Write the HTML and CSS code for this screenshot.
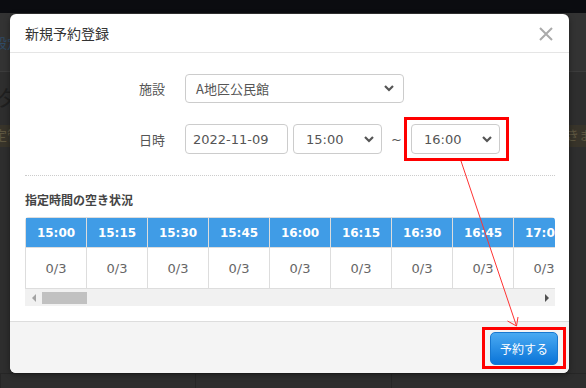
FILE: index.html
```html
<!DOCTYPE html>
<html lang="ja">
  <head>
    <meta charset="UTF-8" />
    <meta name="viewport" content="width=device-width, initial-scale=1.0" />
    <title>新規予約登録</title>
    <link rel="stylesheet" href="styles.css">
  </head>
  <body>
    <!-- page behind the overlay -->
    <div class="page">
      <div class="topbar"></div>
      <div class="nav"><span class="navLink">設定</span></div>
      <div class="pageTitle">タ</div>
      <div class="notice"><span>定管</span><span>きま</span></div>
      <div class="pageBody"></div>
      <div class="calRow">
        <span class="calCell"></span>
        <span class="calCell"></span>
        <span class="calCell"></span>
      </div>
    </div>

    <div class="modal">
      <div class="modalHeader">
        <h4 class="modalTitle">新規予約登録</h4>
        <svg class="closeBtn" width="14" height="14" viewBox="0 0 14 14">
          <path d="M1 1 L13 13 M13 1 L1 13" stroke="#aaa" stroke-width="2" fill="none" />
        </svg>
      </div>

      <div class="modalBody">
        <div class="formGrid">
          <label class="formLabel">施設</label>
          <div class="fields">
            <div class="select selectWide">
              <span>A地区公民館</span>
              <svg width="10" height="7" viewBox="0 0 10 7"><path d="M1 1 L5 5 L9 1" stroke="#555" stroke-width="2.2" fill="none" /></svg>
            </div>
          </div>

          <label class="formLabel">日時</label>
          <div class="fields">
            <div class="input dateInput">2022-11-09</div>
            <div class="select selectTime">
              <span>15:00</span>
              <svg width="10" height="7" viewBox="0 0 10 7"><path d="M1 1 L5 5 L9 1" stroke="#555" stroke-width="2.2" fill="none" /></svg>
            </div>
            <span class="tilde">~</span>
            <div class="select selectTime">
              <span>16:00</span>
              <svg width="10" height="7" viewBox="0 0 10 7"><path d="M1 1 L5 5 L9 1" stroke="#555" stroke-width="2.2" fill="none" /></svg>
            </div>
          </div>
        </div>

        <hr class="dotted" />

        <h5 class="sectionTitle">指定時間の空き状況</h5>
        <div class="slotWrap">
          <table class="slots">
            <tr>
              <th>15:00</th><th>15:15</th><th>15:30</th><th>15:45</th><th>16:00</th><th>16:15</th><th>16:30</th><th>16:45</th><th>17:00</th><th>17:15</th><th>17:30</th>
            </tr>
            <tr>
              <td>0/3</td><td>0/3</td><td>0/3</td><td>0/3</td><td>0/3</td><td>0/3</td><td>0/3</td><td>0/3</td><td>0/3</td><td>0/3</td><td>0/3</td>
            </tr>
          </table>
        </div>
        <div class="scrollbar">
          <span class="sbArrow sbLeft"></span>
          <span class="sbThumb"></span>
          <span class="sbTrack"></span>
          <span class="sbArrow sbRight"></span>
        </div>
      </div>

      <div class="modalFooter">
        <button class="btnReserve">予約する</button>
      </div>
    </div>

    <!-- red annotations -->
    <svg class="annotations" width="586" height="388" viewBox="0 0 586 388">
      <rect x="405.5" y="118.5" width="102" height="41" fill="none" stroke="#f00" stroke-width="3" />
      <rect x="483.5" y="328.5" width="81" height="39" fill="none" stroke="#f00" stroke-width="3" />
      <path d="M461 161 L516.5 326 M507.5 321 L516.5 326 L518 317" stroke="#f33" stroke-width="1" fill="none" />
    </svg>
  </body>
</html>
```

FILE: styles.css
```css
body {
  margin: 0;
  width: 586px;
  height: 388px;
  overflow: hidden;
  position: relative;
  background: #2e2e2e;
  font-family: "DejaVu Sans", "Noto Sans CJK JP", sans-serif;
}
.page {
  display: flex;
  flex-direction: column;
  height: 388px;
}
.topbar {
  height: 13px;
  background: #0b0c10;
}
.nav {
  height: 58px;
  background: #333;
  border-bottom: 1px solid #3c3c3c;
  display: flex;
  align-items: center;
}
.navLink {
  color: #2f4b66;
  font-size: 13px;
  margin-left: -6px;
}
.pageTitle {
  height: 53px;
  color: #1f1f1f;
  font-size: 22px;
  line-height: 53px;
  margin-left: -4px;
}
.notice {
  height: 22px;
  background: #38342a;
  color: #5d5640;
  font-size: 13px;
  line-height: 22px;
  display: flex;
  justify-content: space-between;
  margin: 0 -6px;
}
.pageBody {
  flex: 1;
}
.calRow {
  height: 14px;
  display: flex;
  border-top: 1px solid #262626;
}
.calCell {
  flex: 1;
  border-left: 1px solid #262626;
}

/* modal */
.modal {
  position: absolute;
  left: 10px;
  top: 14px;
  width: 559px;
  height: 359px;
  background: #fff;
  border-radius: 6px;
  display: flex;
  flex-direction: column;
  overflow: hidden;
  box-shadow: 0 2px 6px rgba(0, 0, 0, 0.4);
}
.modalHeader {
  height: 38px;
  border-bottom: 1px solid #e5e5e5;
  display: flex;
  align-items: center;
  justify-content: space-between;
  padding: 0 16px 0 15px;
}
.modalTitle {
  margin: 0;
  font-size: 14px;
  font-weight: normal;
  color: #333;
  font-family: "Noto Sans CJK JP", sans-serif;
}
.closeBtn {
  margin-top: 2px;
}
.modalBody {
  flex: 1;
  padding: 21px 14px 0 15px;
}
.formGrid {
  display: grid;
  grid-template-columns: 140px auto;
  column-gap: 20px;
  row-gap: 21px;
  align-items: center;
}
.formLabel {
  text-align: right;
  font-size: 13px;
  color: #555;
  font-family: "Noto Sans CJK JP", sans-serif;
}
.fields {
  display: flex;
  align-items: center;
}
.select,
.input {
  box-sizing: border-box;
  height: 30px;
  border: 1px solid #ccc;
  border-radius: 4px;
  font-size: 13px;
  color: #555;
  display: flex;
  align-items: center;
  justify-content: space-between;
}
.selectWide {
  width: 219px;
  height: 29px;
  padding: 0 9px 0 10px;
  font-family: "Noto Sans CJK JP", sans-serif;
}
.dateInput {
  width: 103px;
  padding-left: 7px;
  margin-right: 5px;
}
.selectTime {
  width: 89px;
  padding: 0 7px 0 12px;
}
.tilde {
  width: 29px;
  text-align: center;
  font-size: 13px;
  color: #555;
}
.dotted {
  margin: 21px 0 0;
  border: 0;
  border-top: 1px dotted #ccc;
}
.sectionTitle {
  margin: 15px 0 9px;
  font-size: 12px;
  font-weight: bold;
  color: #444;
  font-family: "Noto Sans CJK JP", sans-serif;
}
.slotWrap {
  overflow: hidden;
  border-radius: 4px 4px 0 0;
}
.slots {
  border-collapse: separate;
  border-spacing: 0;
  table-layout: fixed;
  border-left: 1px solid #ddd;
  border-top: 1px solid #ddd;
}
.slots th,
.slots td {
  width: 60px;
  min-width: 60px;
  padding: 0;
  text-align: center;
  border-right: 1px solid #ddd;
  border-bottom: 1px solid #ddd;
}
.slots th {
  height: 29px;
  background: #409ce6;
  color: #fff;
  font-size: 12px;
  font-weight: bold;
}
.slots td {
  height: 40px;
  color: #666;
  font-size: 13px;
}
.scrollbar {
  display: flex;
  align-items: center;
  height: 17px;
  background: #f1f1f1;
}
.sbArrow {
  width: 17px;
  height: 17px;
  display: flex;
  align-items: center;
  justify-content: center;
}
.sbArrow::before {
  content: "";
  border-top: 4px solid transparent;
  border-bottom: 4px solid transparent;
}
.sbLeft::before {
  border-right: 4px solid #a3a3a3;
}
.sbRight::before {
  border-left: 4px solid #505050;
}
.sbThumb {
  width: 45px;
  height: 12px;
  background: #c1c1c1;
}
.sbTrack {
  flex: 1;
}
.modalFooter {
  height: 52px;
  border-top: 1px solid #ddd;
  background: #f4f4f4;
  display: flex;
  align-items: flex-start;
  justify-content: flex-end;
  padding: 10px 11px 0 0;
  box-sizing: border-box;
}
.btnReserve {
  width: 68px;
  height: 33px;
  border: 1px solid #1878d0;
  border-radius: 5px;
  background: linear-gradient(#4aaaf2, #0a74d8);
  color: #fff;
  font-size: 12px;
  font-family: "Noto Sans CJK JP", sans-serif;
  padding: 0;
}
.annotations {
  position: absolute;
  left: 0;
  top: 0;
  pointer-events: none;
}
```
